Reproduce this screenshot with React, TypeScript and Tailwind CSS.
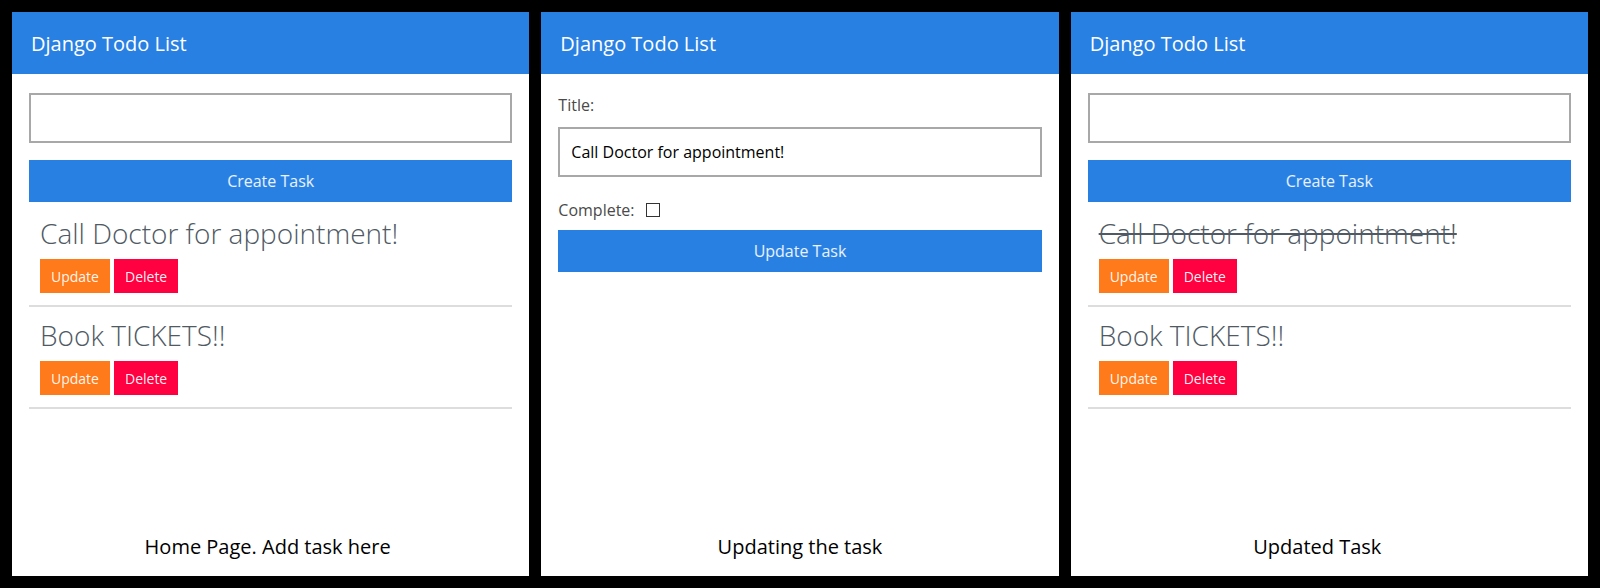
import React from "react";

type Task = { title: string; complete: boolean };

const Header = () => (
    <div className="h-[62px] bg-[#2980e3] flex items-center px-[19px]">
        <h1 className="text-[20px] text-white leading-none pt-[2px]">Django Todo List</h1>
    </div>
);

const Caption = ({ text, className = "" }: { text: string; className?: string }) => (
    <p className={`text-center text-[20px] leading-[28px] text-black pb-[15px] ${className}`}>{text}</p>
);

const TaskItem = ({ task }: { task: Task }) => (
    <div className="px-[11px] pt-[10px] pb-3 border-b-2 border-[#dddddd]">
        <span
            className={`text-[28px] leading-[36px] font-light text-[#4f5a64] ${
                task.complete ? "line-through decoration-[#4f5a64]" : ""
            }`}
        >
            {task.title}
        </span>
        <div className="flex gap-1 mt-2">
            <button className="h-[34px] px-[11px] bg-[#ff7a1a] text-white/95 text-[14px]">Update</button>
            <button className="h-[34px] px-[11px] bg-[#ff0040] text-white/95 text-[14px]">Delete</button>
        </div>
    </div>
);

const HomePanel = ({ tasks, caption, captionClass }: { tasks: Task[]; caption: string; captionClass: string }) => (
    <section className="bg-white flex flex-col">
        <Header />
        <div className="flex-1 px-[17px] pt-[19px]">
            <form className="flex flex-col gap-[17px] mb-[3px]">
                <input className="h-[50px] border-2 border-[#a8a8a8] outline-none px-3" type="text" />
                <button type="button" className="h-[42px] bg-[#2980e3] text-white/90 text-[16px]">
                    Create Task
                </button>
            </form>
            {tasks.map((t) => (
                <TaskItem key={t.title} task={t} />
            ))}
        </div>
        <Caption text={caption} className={captionClass} />
    </section>
);

const UpdatePanel = () => (
    <section className="bg-white flex flex-col">
        <Header />
        <div className="flex-1 px-[17px] pt-[19px]">
            <label className="block text-[16px] leading-6 text-[#4a4a4a]">Title:</label>
            <input
                className="mt-[10px] w-full h-[50px] border-2 border-[#a8a8a8] outline-none px-[11px] text-[16px] text-black"
                type="text"
                defaultValue="Call Doctor for appointment!"
            />
            <div className="mt-[21px] flex items-center gap-[11px] h-6">
                <span className="text-[16px] text-[#4a4a4a]">Complete:</span>
                <span className="w-[14px] h-[14px] border-[1.5px] border-[#333] bg-white" />
            </div>
            <button type="button" className="mt-2 w-full h-[42px] bg-[#2980e3] text-white/90 text-[16px]">
                Update Task
            </button>
        </div>
        <Caption text="Updating the task" />
    </section>
);

export default function App() {
    const before: Task[] = [
        { title: "Call Doctor for appointment!", complete: false },
        { title: "Book TICKETS!!", complete: false },
    ];
    const after: Task[] = [
        { title: "Call Doctor for appointment!", complete: true },
        { title: "Book TICKETS!!", complete: false },
    ];

    return (
        <div className="w-[1600px] h-[588px] bg-black p-3 grid grid-cols-3 gap-3 font-['Open_Sans',sans-serif]">
            <HomePanel tasks={before} caption="Home Page. Add task here" captionClass="pr-[6px]" />
            <UpdatePanel />
            <HomePanel tasks={after} caption="Updated Task" captionClass="pr-[24px]" />
        </div>
    );
}
